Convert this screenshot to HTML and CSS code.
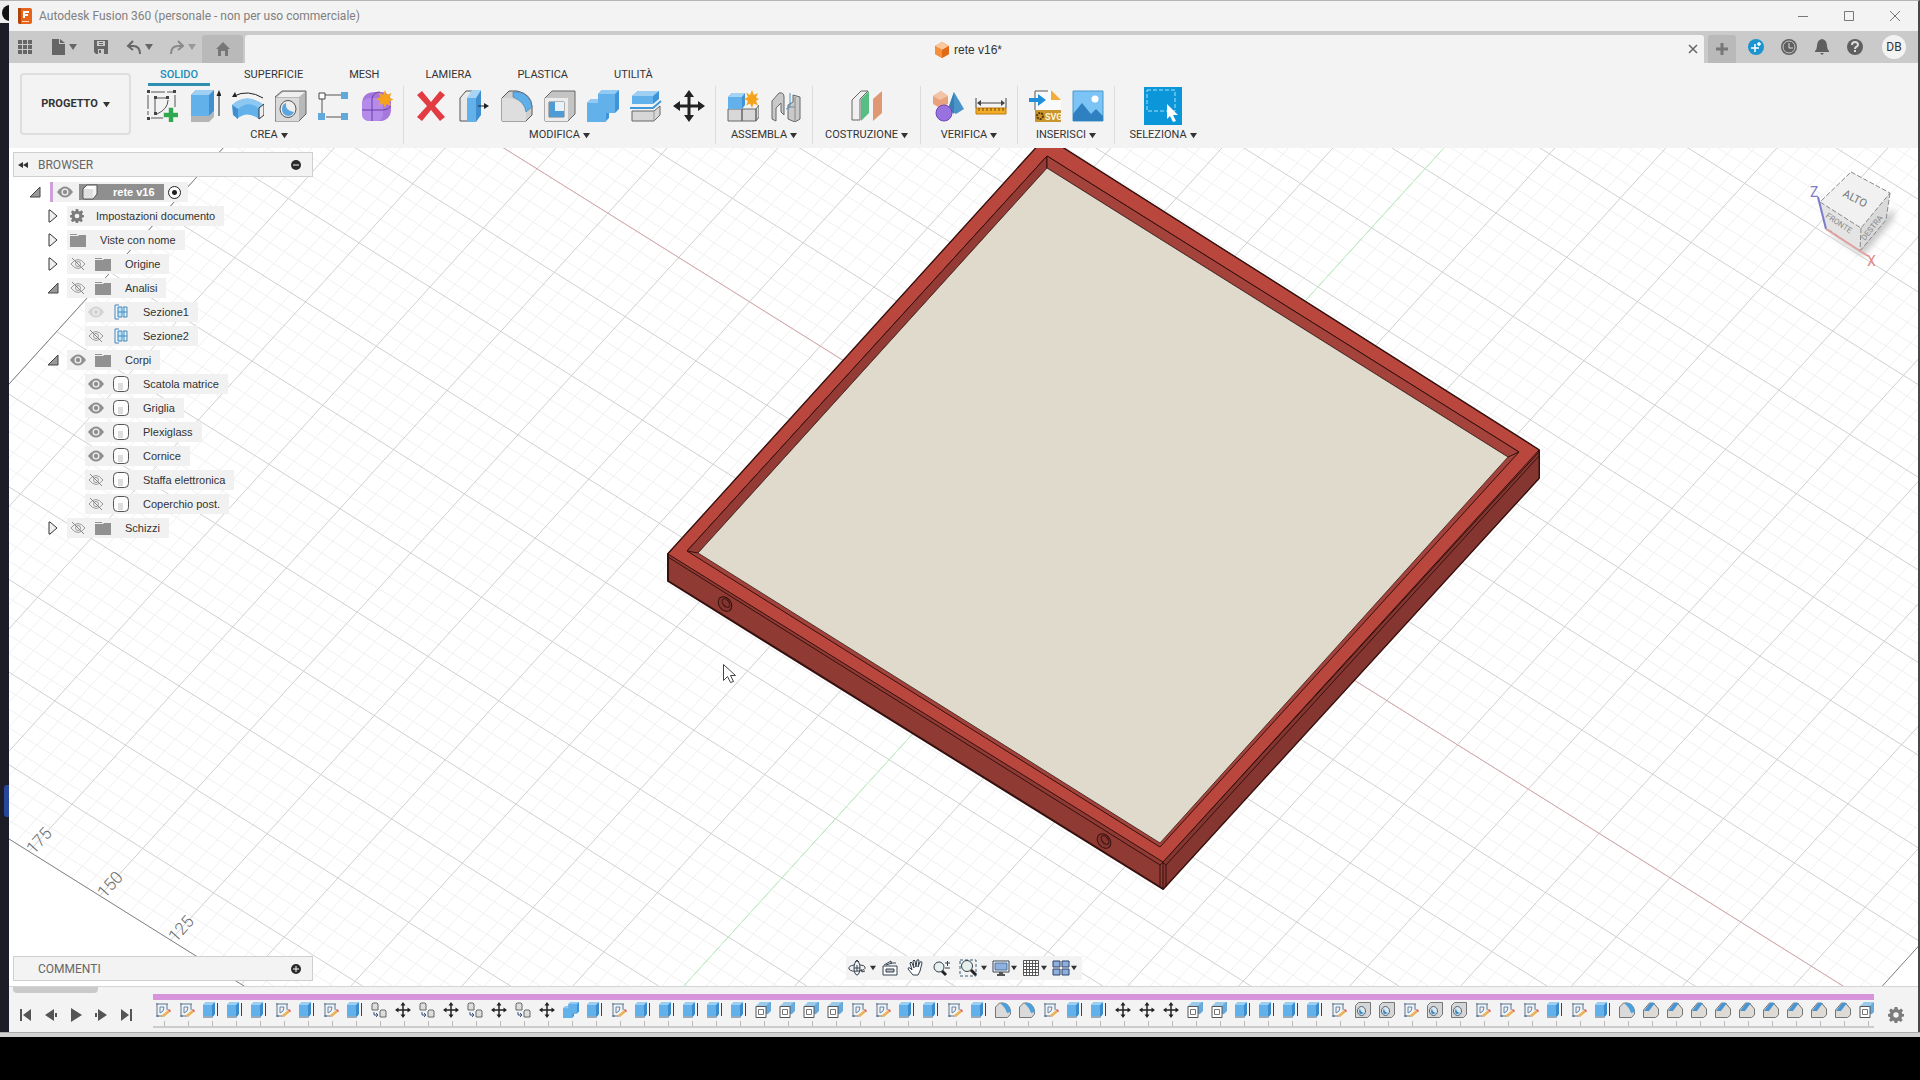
FILE: index.html
```html
<!DOCTYPE html>
<html lang="it">
<head>
<meta charset="utf-8">
<title>Autodesk Fusion 360</title>
<link rel="stylesheet" href="styles.css">
</head>
<body>
<svg class="defs" aria-hidden="true">
  <symbol id="caret" viewBox="0 0 8 8"><path d="M0 1h8L4 7z" fill="currentColor"/></symbol>

  <symbol id="r-sketch" viewBox="0 0 32 32"><path d="M5 2h22M2 5v20M29 5v12M5 28h12" stroke="#555" fill="none" stroke-dasharray="14 2"/><path d="M9 9v14M11 8h9M22 10q0 9-11 14" stroke="#555" fill="none"/><path d="M1 0h3v3H1zM27 0h3v3h-3zM1 27h3v3H1zM8 6h3v3H8zM20 6h3v3h-3zM8 22h3v3H8z" fill="#444"/><path d="M22.500 17.500h5v5h5v5h-5v5h-5v-5h-5v-5h5z" fill="#2fa84f" stroke="#f3f3f3" stroke-width=".6"/></symbol>
  <symbol id="r-extrude" viewBox="0 0 32 32"><path d="M2 26h18l5-5v6l-5 5H2z" fill="#b5b5b5"/><path d="M2 5l5-5h18v21l-5 5H2z" fill="#3f8fd0"/><path d="M2 5h18v21H2z" fill="#62b1ea"/><path d="M2 5l5-5h18l-5 5z" fill="#9fd0f4"/><path d="M30 26V4" stroke="#222"/><path d="M27.500 6L30 0l2.500 6z" fill="#222"/></symbol>
  <symbol id="r-revolve" viewBox="0 0 32 32"><path d="M2 6Q16-1 31 8" stroke="#222" fill="none"/><path d="M0 7l3-5 2 5z" fill="#222"/><path d="M0 15Q14 2 32 15l-5 14Q15 20 5 29z" fill="#62b1ea"/><path d="M0 15Q14 2 32 15l-6 3Q16 10 6 19z" fill="#8cc8f2"/><path d="M0 15l6 4v10l-5-4z" fill="#3f8fd0"/><path d="M32 14v11l-5 4V18z" fill="#eee" stroke="#333"/></symbol>
  <symbol id="r-hole" viewBox="0 0 32 32"><path d="M0 7l7-6h24v23l-7 7H0z" fill="#b8b8b8" stroke="#666"/><path d="M1 8h23v23H1z" fill="#dadada"/><path d="M2 7l6-5h22l-6 5z" fill="#efefef"/><ellipse cx="13" cy="19" rx="8" ry="8.500" fill="#eee" stroke="#555"/><path d="M11 13q-1 8 8 9-2 4-6 4-6-1-6-7 0-5 4-6z" fill="#5ba6de"/></symbol>
  <symbol id="r-pattern" viewBox="0 0 32 32"><path d="M6 5h17M4 8v16M8 27h15" stroke="#555"/><path d="M1 3h6v6H1z" fill="#fff" stroke="#444"/><path d="M23 2h7v7h-7zM0 23h7v7H0zM23 23h7v7h-7z" fill="#5fa9dd"/></symbol>
  <symbol id="r-form" viewBox="0 0 32 32"><path d="M1 13Q2 2 14 2h8q8 2 8 10v9q-1 8-9 10H9q-8 0-8-8z" fill="#a678dd"/><path d="M1 13Q3 8 10 8h8q4 1 4 6v9q0 7-5 8H9q-8 0-8-8z" fill="#b48bea"/><path d="M11 8v23M1 20h21q5 0 8-4M11 8q2-6 8-6" stroke="#6a3da4" fill="none"/><path d="M24 0l1.800 5 4.700-2-2 4.700 4 1.800-4.500 2 2 4.500-4.500-2L24 18l-2-4.500-4.500 2 2-4.500-4.500-2 4.500-2-2-4.500L22 5z" fill="#f5a31c"/></symbol>
  <symbol id="r-delete" viewBox="0 0 32 32"><path d="M2 5l5-4 9 11 9-11 5 4-10 11 10 11-5 4-9-11-9 11-5-4 10-11z" fill="#e23b42"/></symbol>
  <symbol id="r-press" viewBox="0 0 32 32"><path d="M2 8l6-7h7l-5 7v23H2z" fill="#e9e9e9" stroke="#555"/><path d="M9 8h9v24H9z" fill="#62b1ea"/><path d="M9 8l5-8h9l-5 8z" fill="#a5d4f5"/><path d="M18 8l5-8v25l-5 7z" fill="#3f8fd0"/><path d="M20 16h8" stroke="#222"/><path d="M26 13l5 3-5 3z" fill="#222"/></symbol>
  <symbol id="r-fillet" viewBox="0 0 32 32"><path d="M1 31V8l7-7h8q14 3 15 15v9l-6 6z" fill="#cfcfcf" stroke="#555"/><path d="M1 31V8h7q15 2 17 14v9z" fill="#dedede"/><path d="M12 2h7q11 4 12 15l-6 5Q24 12 12 7z" fill="#5fb0ea" stroke="#47789d" stroke-width=".6"/></symbol>
  <symbol id="r-shell" viewBox="0 0 32 32"><path d="M1 8l7-7h23v23l-7 7H1z" fill="#c4c4c4" stroke="#666"/><path d="M1 8h23v23H1z" fill="#ececec"/><path d="M5 12h15v15H5z" fill="#fff" stroke="#777"/><path d="M5 12h6v9h9v6H5z" fill="#4e9bd5"/><path d="M11 12h9v9h-9z" fill="#e7f2fb"/></symbol>
  <symbol id="r-combine" viewBox="0 0 32 32"><path d="M0 13l4-4h7V4l4-4h17v19l-4 4h-6v5l-4 4H0z" fill="#3f94d8"/><path d="M0 13h11V4h17v19h-9v9H0z" fill="#62b1ea"/><path d="M11 4l4-4h17l-4 4zM0 13l4-4h7v4z" fill="#93caf3"/></symbol>
  <symbol id="r-split" viewBox="0 0 32 32"><path d="M2 6l6-5h21v8l-6 5H2z" fill="#3f94d8"/><path d="M2 6h21v8H2z" fill="#62b1ea"/><path d="M2 6l6-5h21l-6 5z" fill="#9fd0f4"/><path d="M0 18h23l8-7" stroke="#3e98da" stroke-width="2" fill="none"/><path d="M2 21h22l6-5v9l-6 6H2z" fill="#d7d7d7" stroke="#666"/><path d="M24 21v10" stroke="#999"/></symbol>
  <symbol id="r-move" viewBox="0 0 32 32"><path d="M16 0l5 7h-3.500v7.500H25V11l7 5-7 5v-3.500h-7.500V25H21l-5 7-5-7h3.500v-7.500H7V21l-7-5 7-5v3.500h7.500V7H11z" fill="#222"/></symbol>
  <symbol id="r-component" viewBox="0 0 32 32"><path d="M1 19h14v12H1zM15 19h14v12H15zM29 19l3-4v12l-3 4z" fill="#d8d8d8" stroke="#666"/><path d="M1 7l4-4h13v12l-3 4H1z" fill="#3f94d8"/><path d="M1 7h14v12H1z" fill="#62b1ea"/><path d="M1 7l4-4h13l-3 4z" fill="#a4d4f5"/><path d="M25 0l1.800 5 4.200-2-2 4.500 3 1.500-3 2 2 4.500-4.500-2L25 18l-2-4.500-4 2 2-4.500-4-2 4-2-2-4.500L23 5z" fill="#f5a31c"/></symbol>
  <symbol id="r-joint" viewBox="0 0 32 32"><path d="M2 11l7-8q5-1 5 4v18l-3-3V13l-5 5v13l-4-2z" fill="#c9c9c9" stroke="#666"/><path d="M30 7v22l-5 3-7-3V15l5-3V5z" fill="#c9c9c9" stroke="#666"/><path d="M25 7v24M18 17h7" stroke="#888"/><path d="M20 3v14l-4 2" stroke="#3e98da" fill="none"/></symbol>
  <symbol id="r-plane" viewBox="0 0 32 32"><path d="M1 10L10 1h7L9 9v21H1z" fill="#f0f0f0" stroke="#666"/><path d="M10 9l8-8v22l-8 8z" fill="#56be82"/><path d="M22 9l9-8v22l-9 8z" fill="#e09872"/></symbol>
  <symbol id="r-measure" viewBox="0 0 32 32"><path d="M1 6l8-5 7 5v8l-8 4-7-4z" fill="#e9a37c"/><path d="M9 1l7 5-8 4-7-4z" fill="#f3c3a5"/><path d="M22 2l10 17-8 5-8-5z" fill="#4b94c9"/><path d="M22 2v22l-6-5z" fill="#3a7fb2"/><circle cx="12" cy="23" r="8" fill="#9a72e0" stroke="#6e48b8"/></symbol>
  <symbol id="r-ruler" viewBox="0 0 32 32"><path d="M1 8v10M31 8v10M3 13h26" stroke="#444"/><path d="M6 10l-4 3 4 3zM26 10l4 3-4 3z" fill="#444"/><path d="M1 18h30v6H1z" fill="#f0ad25" stroke="#c07a12"/><path d="M4 18v3M8 18v3M12 18v3M16 18v3M20 18v3M24 18v3M28 18v3" stroke="#704606"/></symbol>
  <symbol id="r-insert" viewBox="0 0 32 32"><path d="M6 0h18l8 10v22H6z" fill="#fafafa"/><path d="M6 20V1h13" stroke="#555" fill="none"/><path d="M22 0l10 10H22z" fill="#f2ab3c"/><path d="M0 8h9V4l8 6-8 6v-4H0z" fill="#2090dc"/><path d="M6 20h27v12H6z" fill="#c9962e"/><circle cx="11" cy="26" r="3" fill="none" stroke="#5b3805" stroke-width="2" stroke-dasharray="2 1"/><text x="16" y="30" font-size="9" font-weight="700" fill="#fff3d5" font-family="Roboto, sans-serif">SVG</text></symbol>
  <symbol id="r-image" viewBox="0 0 32 32"><path d="M1 1h30v30H1z" fill="#7cc4f5" stroke="#4b98cd"/><path d="M1 24l9-11 9 11 5-5 7 7v5H1z" fill="#2f80c0"/><circle cx="23" cy="9" r="3.500" fill="#fff"/></symbol>
  <symbol id="r-select" viewBox="0 0 38 38"><path d="M0 0h38v38H0z" fill="#0a96d9"/><path d="M3 3h28v21H3z" fill="none" stroke="#a8e0fa" stroke-dasharray="4 2"/><path d="M23 17v15l3-3 3 6 3-1-3-6h5z" fill="#fff"/></symbol>

  <symbol id="t-sk" viewBox="0 0 16 16"><path d="M1 2h12M2 1v14M12 2v6M2 14h6M1 14h3" stroke="#5d7590" fill="none"/><path d="M5 5v6M5 5h4M9 5q0 5-4 6" stroke="#5d86ad" fill="none"/><path d="M6 14l7-6 2 2-6 5z" fill="#e9b45b"/><path d="M13 8l1-1 2 2-1 1z" fill="#d45"/></symbol>
  <symbol id="t-ex" viewBox="0 0 16 16"><path d="M0 3l3-3h9v12l-3 4H0z" fill="#3d8dcd"/><path d="M0 3h9v11H0z" fill="#62b1ea"/><path d="M0 3l3-3h9L9 3z" fill="#9ccff2"/><path d="M0 14h10l-1 2H0z" fill="#9ab"/><path d="M14.500 14V1" stroke="#345"/></symbol>
  <symbol id="t-cp" viewBox="0 0 16 16"><path d="M2 1h4l1 1v6H1V2zM10 8h4l1 1v6H9V9z" fill="#dedede" stroke="#666"/><path d="M3 10v3h4M5 11l2 2-2 2" stroke="#357" fill="none"/></symbol>
  <symbol id="t-mv" viewBox="0 0 32 32"><use href="#r-move"/></symbol>
  <symbol id="t-cb" viewBox="0 0 32 32"><use href="#r-combine"/></symbol>
  <symbol id="t-sh" viewBox="0 0 16 16"><path d="M5 4V1l1-1h10v9l-3 3h-2V4z" fill="#67a9da"/><path d="M1 4.500h10v11H1z" fill="#fff" stroke="#555"/><path d="M3.500 7.500h5v5h-5z" fill="#fff" stroke="#777"/><path d="M1 4l4-4h10l-4 4z" fill="#9ccaea"/></symbol>
  <symbol id="t-fi" viewBox="0 0 16 16"><path d="M.5 15.500V5l4-4h4q6 1 7 8v3l-3 3.500z" fill="#dadada" stroke="#777"/><path d="M6 1h4q5 3 6 9l-4 1Q10 5 6 2z" fill="#4b9fdd"/></symbol>
  <symbol id="t-ho" viewBox="0 0 16 16"><path d="M.5 3.500l3-3h12v12l-3 3H.5z" fill="#d6d6d6" stroke="#777"/><ellipse cx="6.500" cy="9" rx="4" ry="4.500" fill="#dde8ef" stroke="#567"/><path d="M5 6q0 4 4 5-5 3-5-2z" fill="#3f8dc4"/></symbol>
  <symbol id="t-ch" viewBox="0 0 16 16"><path d="M.5 15.500V8l6-7h4l5 6v6l-3 2.500z" fill="#dedad4" stroke="#777"/><path d="M1 9l6-8h5L6 9z" fill="#4b94d2"/></symbol>

  <symbol id="eye" viewBox="0 0 16 12"><path d="M0 6q8-11 16 0-8 11-16 0z" fill="#8f8f8f"/><circle cx="8" cy="6" r="3.500" fill="#f1f1f1"/><circle cx="8" cy="6" r="2.200" fill="#8f8f8f"/></symbol>
  <symbol id="eye-off" viewBox="0 0 16 12"><path d="M1 6q7-9 14 0-7 9-14 0z" fill="none" stroke="#9a9a9a"/><circle cx="8" cy="6" r="2.500" fill="none" stroke="#9a9a9a"/><path d="M2 0l12 12" stroke="#888"/></symbol>
  <symbol id="folder" viewBox="0 0 16 14"><path d="M0 1h7v1H0zM0 3h8l1-1h7v12H0z" fill="#919191"/></symbol>
  <symbol id="gear" viewBox="0 0 16 16"><path d="M6.600 0h2.800l.4 2.300 1.400.6L13.100 1.500l2 2-1.500 1.900.5 1.300 1.900.3v2.500l-2 .3-.6 1.400 1.300 1.900-1.900 2-1.900-1.400-1.300.6-.3 1.700H6.600l-.4-1.800-1.400-.6-1.800 1.400-2-1.900 1.300-1.900L1.800 10 0 9.500V7l1.900-.4.5-1.400L1 3.400l2-1.900 1.900 1.300 1.300-.6zM8 5.300A2.700 2.700 0 108 10.700 2.700 2.700 0 008 5.300z" fill="#7c7c7c"/></symbol>
  <symbol id="section" viewBox="0 0 14 16"><path d="M5 1H1v14h4M9 3h4v10H9" fill="none" stroke="#4889b8"/><path d="M4 3h4v10H4z" fill="#bfe3fa" stroke="#3b8cc4"/><path d="M4 8h9M10 3v10" stroke="#3b8cc4"/></symbol>
  <symbol id="body" viewBox="1 1 16 16"><rect x="1.500" y="1.500" width="15" height="15" rx="4" fill="#fdfdfd" stroke="#555"/><path d="M6 8h5v7H6z" fill="#ddd"/></symbol>
  <symbol id="cube" viewBox="1 1 16 16"><path d="M2 6l4-4h10v9l-4 5H3l-1-1z" fill="#f4f4f4" stroke="#555"/><path d="M3 6h9v9H3z" fill="#e0e0e0"/><path d="M3 6l3-3h9l-3 3z" fill="#fff"/></symbol>
  <symbol id="closed" viewBox="0 0 10 14"><path d="M1 1v12h1l7-6-7-6z" fill="#efefef" stroke="#333"/></symbol>
  <symbol id="open" viewBox="0 0 12 12"><path d="M11 1v10H1z" fill="#999" stroke="#444"/></symbol>

  <symbol id="n-orbit" viewBox="0 0 18 18"><ellipse cx="9" cy="9" rx="3" ry="7" fill="none" stroke="#34404e"/><path d="M6 6q-6 1-5 4 2 3 10 2 7-1 6-4-1-2-5-2" fill="none" stroke="#34404e"/><path d="M9 6v6M6 9h6M7 3l2-2 2 2M13 10l1 3 3-1" stroke="#34404e" fill="none"/></symbol>
  <symbol id="n-look" viewBox="0 0 18 18"><path d="M2 7h14v9H2z" fill="#fff" stroke="#34404e"/><path d="M5 10h8v3H5z" fill="#bbb" stroke="#34404e"/><path d="M3 6l7-4v2h5M5 6l6-2" stroke="#34404e" fill="none"/></symbol>
  <symbol id="n-hand" viewBox="0 0 18 18"><path d="M6 16l-5-6q0-2 2-1l2 2-2-7q1-2 2 0l2 5-1-7q1-2 2 0l1 6 1-7q2-1 2 1l-1 6 2-5q2-1 2 1l-2 8-2 4z" fill="#fff" stroke="#34404e"/></symbol>
  <symbol id="n-zoom" viewBox="0 0 18 18"><circle cx="6" cy="8" r="5" fill="#e6f0f0" stroke="#34404e"/><path d="M9 12l4 4" stroke="#222" stroke-width="3"/><path d="M12 4h5M14.500 2v5M12 9h5" stroke="#34404e"/></symbol>
  <symbol id="n-fit" viewBox="0 0 18 18"><path d="M1 1h16v16H1z" fill="none" stroke="#35607a" stroke-dasharray="3 2"/><circle cx="8" cy="7" r="5.500" fill="#e6f0ea" stroke="#34404e"/><path d="M12 11l5 5" stroke="#222" stroke-width="3"/></symbol>
  <symbol id="n-screen" viewBox="0 0 18 18"><path d="M1 2h16v11H1z" fill="#fff" stroke="#34404e"/><path d="M3 4h12v7H3z" fill="#8eb2e0" stroke="#4f6d95"/><path d="M7 13h4v2h2v2H5v-2h2z" fill="#555"/></symbol>
  <symbol id="n-grid" viewBox="0 0 18 18"><path d="M1.500 1.500h15v15h-15zM4.500 1v16M7.500 1v16M10.500 1v16M13.500 1v16M1 4.500h16M1 7.500h16M1 10.500h16M1 13.500h16" fill="#fff" stroke="#555"/></symbol>
  <symbol id="n-views" viewBox="0 0 18 18"><path d="M1 2h7v6H1zM10 2h7v6h-7zM1 10h7v6H1zM10 10h7v6h-7z" fill="#8fb0df" stroke="#2d4468"/></symbol>
</svg>

<div class="desktop">
  <aside class="behind"><span class="behind-tab"></span><span class="behind-logo"></span><span class="behind-accent"></span></aside>
  <div class="window">
    <header class="titlebar">
      <svg class="logo" viewBox="0 0 14 16"><rect width="14" height="16" rx="2" fill="#e8641b"/><path d="M0 0h3v16H2a2 2 0 01-2-2z" fill="#b34408"/><path d="M5 3h6v2H7v1h3v2H7v2H5z" fill="#fff"/><path d="M4 13h7v1H4z" fill="#ffd2b5"/></svg>
      <h1>Autodesk Fusion 360 (personale - non per uso commerciale)</h1>
      <button aria-label="Riduci"><svg viewBox="0 0 12 12"><path d="M1 6.500h10" stroke="#777"/></svg></button>
      <button aria-label="Ingrandisci"><svg viewBox="0 0 12 12"><path d="M1.500 1.500h9v9h-9z" fill="none" stroke="#777"/></svg></button>
      <button aria-label="Chiudi"><svg viewBox="0 0 12 12"><path d="M1 1l10 10M11 1L1 11" stroke="#777"/></svg></button>
    </header>

    <div class="docbar">
      <div class="quick">
        <button aria-label="Pannello dati"><svg viewBox="0 0 16 16"><path d="M1 1h4v4H1zM6 1h4v4H6zM11 1h4v4h-4zM1 6h4v4H1zM6 6h4v4H6zM11 6h4v4h-4zM1 11h4v4H1zM6 11h4v4H6zM11 11h4v4h-4z" fill="#666"/></svg></button>
        <button class="menu" aria-label="File"><svg viewBox="0 0 16 16"><path d="M2 0h7v5h6v11H2z" fill="#666"/><path d="M10 0l5 4h-5z" fill="#666"/></svg><svg class="caret"><use href="#caret"/></svg></button>
        <button aria-label="Salva"><svg viewBox="0 0 16 16"><path d="M1 1h14v14H3l-2-2z" fill="#666"/><path d="M4 2h8v5H4zM5 10h6v5H5z" fill="#cacaca"/><path d="M6 3h4v1H6zM6 5h4v1H6zM6 11h2v3H6z" fill="#666"/></svg></button>
        <button class="menu" aria-label="Annulla"><svg viewBox="0 0 16 16"><path d="M7 2L2 7l5 4M2 7h5q7 0 7 8" fill="none" stroke="#666" stroke-width="2"/></svg><svg class="caret"><use href="#caret"/></svg></button>
        <button class="menu dim" aria-label="Ripeti"><svg viewBox="0 0 16 16"><path d="M9 2l5 5-5 4M14 7H9q-7 0-7 8" fill="none" stroke="#8a8a8a" stroke-width="2"/></svg><svg class="caret"><use href="#caret"/></svg></button>
      </div>
      <button class="home" aria-label="Home"><svg viewBox="0 0 16 16"><path d="M8 1l7 7h-2v7h-3v-5H6v5H3V8H1z" fill="#777"/></svg></button>
      <div class="doctab">
        <span class="docname"><svg viewBox="0 0 14 16"><path d="M7 0l7 4v8l-7 4-7-4V4z" fill="#f0791e"/><path d="M7 0l7 4-7 4-7-4z" fill="#fbc79c"/><path d="M7 8l7-4v8l-7 4z" fill="#e06a15"/><path d="M0 4l7 4v8l-7-4z" fill="#f58f3c"/></svg>rete v16*</span>
        <button aria-label="Chiudi documento"><svg viewBox="0 0 10 10"><path d="M1 1l8 8M9 1L1 9" stroke="#666" stroke-width="1.500"/></svg></button>
      </div>
      <button class="newtab" aria-label="Nuovo"><svg viewBox="0 0 14 14"><path d="M7 1v12M1 7h12" stroke="#777" stroke-width="3"/></svg></button>
      <div class="account">
        <button aria-label="Estensioni"><svg viewBox="0 0 16 16"><circle cx="8" cy="8" r="8" fill="#1c94d0"/><path d="M7 5v8M3 9h8M11 3v4M9 5h4" stroke="#fff" stroke-width="1.500"/></svg></button>
        <button aria-label="Stato processi"><svg viewBox="0 0 16 16"><circle cx="8" cy="8" r="8" fill="#5f5f5f"/><circle cx="8" cy="8" r="6" fill="none" stroke="#cacaca"/><path d="M8 4v5h4" stroke="#ddd" fill="none"/></svg></button>
        <button aria-label="Notifiche"><svg viewBox="0 0 16 16"><path d="M8 0q5 1 5 7 0 3 2 5v1H1v-1q2-2 2-5 0-6 5-7zM6 14h4l-2 2z" fill="#5f5f5f"/></svg></button>
        <button aria-label="Guida"><svg viewBox="0 0 16 16"><circle cx="8" cy="8" r="8" fill="#5f5f5f"/><path d="M5 6q0-3 3-3t3 3q0 1-2 2-1 1-1 2M8 11v2" stroke="#ddd" stroke-width="2" fill="none"/></svg></button>
        <button class="avatar">DB</button>
      </div>
    </div>

    <div class="ribbon">
      <button class="workspace">PROGETTO <svg class="caret"><use href="#caret"/></svg></button>
      <div class="ribbon-main">
        <nav class="tabs">
          <button class="active">SOLIDO</button><button>SUPERFICIE</button><button>MESH</button><button>LAMIERA</button><button>PLASTICA</button><button>UTILITÀ</button>
        </nav>
        <div class="groups">
          <section><div class="tools"><button aria-label="Crea schizzo"><svg><use href="#r-sketch"/></svg></button><button aria-label="Estrusione"><svg><use href="#r-extrude"/></svg></button><button aria-label="Rivoluzione"><svg><use href="#r-revolve"/></svg></button><button aria-label="Foro"><svg><use href="#r-hole"/></svg></button><button aria-label="Serie"><svg><use href="#r-pattern"/></svg></button><button aria-label="Crea forma"><svg><use href="#r-form"/></svg></button></div><button class="label">CREA <svg class="caret"><use href="#caret"/></svg></button></section>
          <section><div class="tools"><button aria-label="Elimina"><svg><use href="#r-delete"/></svg></button><button aria-label="Premi/Tira"><svg><use href="#r-press"/></svg></button><button aria-label="Raccordo"><svg><use href="#r-fillet"/></svg></button><button aria-label="Svuota"><svg><use href="#r-shell"/></svg></button><button aria-label="Combina"><svg><use href="#r-combine"/></svg></button><button aria-label="Dividi"><svg><use href="#r-split"/></svg></button><button aria-label="Sposta"><svg><use href="#r-move"/></svg></button></div><button class="label">MODIFICA <svg class="caret"><use href="#caret"/></svg></button></section>
          <section><div class="tools"><button aria-label="Nuovo componente"><svg><use href="#r-component"/></svg></button><button aria-label="Giunto"><svg><use href="#r-joint"/></svg></button></div><button class="label">ASSEMBLA <svg class="caret"><use href="#caret"/></svg></button></section>
          <section class="single"><div class="tools"><button aria-label="Piano di offset"><svg><use href="#r-plane"/></svg></button></div><button class="label">COSTRUZIONE <svg class="caret"><use href="#caret"/></svg></button></section>
          <section><div class="tools"><button aria-label="Interferenza"><svg><use href="#r-measure"/></svg></button><button aria-label="Misura"><svg><use href="#r-ruler"/></svg></button></div><button class="label">VERIFICA <svg class="caret"><use href="#caret"/></svg></button></section>
          <section><div class="tools"><button aria-label="Inserisci SVG"><svg><use href="#r-insert"/></svg></button><button aria-label="Inserisci immagine"><svg><use href="#r-image"/></svg></button></div><button class="label">INSERISCI <svg class="caret"><use href="#caret"/></svg></button></section>
          <section><div class="tools"><button class="big" aria-label="Seleziona"><svg><use href="#r-select"/></svg></button></div><button class="label">SELEZIONA <svg class="caret"><use href="#caret"/></svg></button></section>
        </div>
      </div>
    </div>

    <main class="viewport">
      <svg class="scene" viewBox="9 148 1909 838" preserveAspectRatio="xMidYMid slice">
        <path id="minor" fill="none" stroke="#f0f0f0"/>
        <path id="major" fill="none" stroke="#d0d0d0"/>
        <path id="edge" fill="none" stroke="#808080"/>
        <path id="axis-x" stroke="#d8a9ab"/>
        <path id="axis-y" stroke="#b9f3bd"/>
        <g font-family="Roboto, sans-serif" font-size="17" font-weight="300" fill="#6b6b6b">
          <text transform="translate(34 855) rotate(-48)">175</text>
          <text transform="translate(105 899) rotate(-48)">150</text>
          <text transform="translate(176 943) rotate(-48)">125</text>
        </g>
        <g stroke="#35100e" stroke-linejoin="round">
          <path d="M668 554L1046 137 1539 450V478L1163 889 668 581z" fill="#903a34" stroke-width="2"/>
          <path d="M1163 862L1539 452V478L1163 889z" fill="#853631"/>
          <path d="M668 554L1046 137 1539 450 1163 862z" fill="#b9473e"/>
          <path d="M668 557L1160 865V887M1166 887V865L1539 456M1160 865q3-4 6 0" fill="none"/>
          <path d="M687 551L1047 156 1519 452 1160 847z" fill="#a4433c"/>
          <path d="M687 551L1047 156V168L698 553z" fill="#953b35"/>
          <path d="M1047 156L1519 452 1508 457 1047 168z" fill="#a4433c"/>
          <path d="M698 553L1047 168 1508 457 1160 843z" fill="#e0dacd" stroke="#54302b"/>
          <g fill="#843530"><ellipse cx="725" cy="604" rx="6" ry="8" transform="rotate(-38 725 604)"/><ellipse cx="726" cy="603" rx="3" ry="5" transform="rotate(-38 726 603)"/><ellipse cx="1104" cy="841" rx="6" ry="8" transform="rotate(-38 1104 841)"/><ellipse cx="1105" cy="840" rx="3" ry="5" transform="rotate(-38 1105 840)"/></g>
        </g>
        <path d="M723.500 664.500v16l4-4 3 6 3-1-3-6h5z" fill="#fff" stroke="#444"/>
      </svg>

      <div class="overlay top">
        <section class="browser">
          <header class="panel"><svg class="collapse" viewBox="0 0 10 6"><path d="M5 0v6L0 3zM10 0v6L5 3z" fill="#333"/></svg><h2>BROWSER</h2><button aria-label="Comprimi"><svg viewBox="0 0 10 10"><circle cx="5" cy="5" r="5" fill="#2b2b2b"/><path d="M2 5h6" stroke="#fff"/></svg></button></header>
          <ul class="tree">
            <li class="root"><svg class="arrow"><use href="#open"/></svg><span class="row"><svg class="eye"><use href="#eye"/></svg><b><svg class="ico"><use href="#cube"/></svg>rete v16</b><input type="radio" checked aria-label="Attiva componente"></span></li>
            <li class="l1"><svg class="arrow"><use href="#closed"/></svg><span class="row doc"><svg class="gear"><use href="#gear"/></svg>Impostazioni documento</span></li>
            <li class="l1"><svg class="arrow"><use href="#closed"/></svg><span class="row views"><svg class="ico"><use href="#folder"/></svg>Viste con nome</span></li>
            <li class="l1"><svg class="arrow"><use href="#closed"/></svg><span class="row"><svg class="eye"><use href="#eye-off"/></svg><svg class="ico"><use href="#folder"/></svg>Origine</span></li>
            <li class="l1"><svg class="arrow"><use href="#open"/></svg><span class="row"><svg class="eye"><use href="#eye-off"/></svg><svg class="ico"><use href="#folder"/></svg>Analisi</span></li>
            <li class="l2"><span class="row"><svg class="eye faint"><use href="#eye"/></svg><svg class="ico"><use href="#section"/></svg>Sezione1</span></li>
            <li class="l2"><span class="row"><svg class="eye"><use href="#eye-off"/></svg><svg class="ico"><use href="#section"/></svg>Sezione2</span></li>
            <li class="l1"><svg class="arrow"><use href="#open"/></svg><span class="row"><svg class="eye"><use href="#eye"/></svg><svg class="ico"><use href="#folder"/></svg>Corpi</span></li>
            <li class="l2"><span class="row"><svg class="eye"><use href="#eye"/></svg><svg class="ico"><use href="#body"/></svg>Scatola matrice</span></li>
            <li class="l2"><span class="row"><svg class="eye"><use href="#eye"/></svg><svg class="ico"><use href="#body"/></svg>Griglia</span></li>
            <li class="l2"><span class="row"><svg class="eye"><use href="#eye"/></svg><svg class="ico"><use href="#body"/></svg>Plexiglass</span></li>
            <li class="l2"><span class="row"><svg class="eye"><use href="#eye"/></svg><svg class="ico"><use href="#body"/></svg>Cornice</span></li>
            <li class="l2"><span class="row"><svg class="eye"><use href="#eye-off"/></svg><svg class="ico"><use href="#body"/></svg>Staffa elettronica</span></li>
            <li class="l2"><span class="row"><svg class="eye"><use href="#eye-off"/></svg><svg class="ico"><use href="#body"/></svg>Coperchio post.</span></li>
            <li class="l1"><svg class="arrow"><use href="#closed"/></svg><span class="row"><svg class="eye"><use href="#eye-off"/></svg><svg class="ico"><use href="#folder"/></svg>Schizzi</span></li>
          </ul>
        </section>
        <svg class="viewcube" viewBox="1805 162 100 110" font-family="Roboto, sans-serif">
          <defs><filter id="soft" x="-20%" y="-20%" width="140%" height="140%"><feGaussianBlur stdDeviation="3"/></filter></defs>
          <path d="M1829 232l34 24 30-36 2-12-34 26z" fill="#c8c8c8" filter="url(#soft)"/>
          <path d="M1851 172l39 21-29 35-41-26z" fill="#f1f1f1"/>
          <path d="M1820 202l41 26-1 23-34-23z" fill="#e4e4e4"/>
          <path d="M1890 193l-29 35-1 23 26-31z" fill="#dadada"/>
          <path d="M1851 172l39 21-29 35-41-26zM1861 228l-1 23-34-23M1890 193l-4 27-26 31" fill="none" stroke="#888" stroke-dasharray="5 2"/>
          <path d="M1818 197l8 32" stroke="#7c7cc8" stroke-width="2"/><path d="M1826 229l42 27" stroke="#e3a0a0" stroke-width="2"/>
          <text transform="translate(1842 196) rotate(27)" font-size="11" fill="#777">ALTO</text>
          <text transform="translate(1825 217) rotate(34)" font-size="8" fill="#888">FRONTE</text>
          <text transform="translate(1865 241) rotate(-52)" font-size="8" fill="#888">DESTRA</text>
          <text x="1810" y="197" font-size="14" fill="#7c7cc8">Z</text>
          <text x="1867" y="266" font-size="14" fill="#e08484">X</text>
        </svg>
      </div>
      <div class="overlay bottom">
        <section class="panel comments"><h2>COMMENTI</h2><button aria-label="Espandi"><svg viewBox="0 0 10 10"><circle cx="5" cy="5" r="5" fill="#2b2b2b"/><path d="M2 5h6M5 2v6" stroke="#fff"/></svg></button></section>
        <nav class="navbar">
          <button class="menu" aria-label="Orbita"><svg><use href="#n-orbit"/></svg><svg class="caret"><use href="#caret"/></svg></button>
          <button aria-label="Guarda"><svg><use href="#n-look"/></svg></button>
          <button aria-label="Panoramica"><svg><use href="#n-hand"/></svg></button>
          <button aria-label="Zoom"><svg><use href="#n-zoom"/></svg></button>
          <button class="menu" aria-label="Adatta"><svg><use href="#n-fit"/></svg><svg class="caret"><use href="#caret"/></svg></button>
          <button class="menu tight" aria-label="Visualizzazione"><svg><use href="#n-screen"/></svg><svg class="caret"><use href="#caret"/></svg></button>
          <button class="menu tight" aria-label="Griglia"><svg><use href="#n-grid"/></svg><svg class="caret"><use href="#caret"/></svg></button>
          <button class="menu tight" aria-label="Viste"><svg><use href="#n-views"/></svg><svg class="caret"><use href="#caret"/></svg></button>
        </nav>
      </div>
    </main>

    <footer class="timeline">
      <div class="playback">
        <span class="thumb"></span>
        <div class="transport">
          <button aria-label="Inizio"><svg viewBox="0 0 14 14"><path d="M1 1h2v12H1zM12 1v12L4 7z" fill="#555"/></svg></button>
          <button aria-label="Indietro"><svg viewBox="0 0 14 14"><path d="M10 1v12L1 7zM11 5h2v4h-2z" fill="#555"/></svg></button>
          <button aria-label="Riproduci"><svg viewBox="0 0 14 14"><path d="M2 0v14l11-7z" fill="#555"/></svg></button>
          <button aria-label="Avanti"><svg viewBox="0 0 14 14"><path d="M4 1v12l9-6zM1 5h2v4H1z" fill="#555"/></svg></button>
          <button aria-label="Fine"><svg viewBox="0 0 14 14"><path d="M11 1h2v12h-2zM2 1v12l8-6z" fill="#555"/></svg></button>
        </div>
      </div>
      <div class="history"><div class="group-bar"></div><ol id="features"></ol></div>
      <button class="settings" aria-label="Impostazioni"><svg><use href="#gear"/></svg></button>
    </footer>
  </div>
</div>
<div class="taskbar-edge"></div>
<script src="app.js"></script>
</body>
</html>
```
FILE: styles.css
```css
* { box-sizing: border-box; }
body { margin: 0; height: 100vh; overflow: hidden; display: flex; flex-direction: column; background: #000; color: #333; font: 11px/16px Roboto, "Liberation Sans", sans-serif; padding-bottom: 43px; }
.defs { position: absolute; width: 0; height: 0; }
button { border: 0; padding: 0; margin: 0; background: none; color: inherit; font: inherit; display: flex; align-items: center; justify-content: center; }
h1, h2 { margin: 0; font-weight: 400; }
svg { flex: none; }
.caret { width: 8px; height: 8px; color: #333; }

.desktop { flex: 1; min-height: 0; display: flex; background: #f3f3f3; border-top: 1px solid #b4b4b4; border-right: 2px solid #484848; }
.behind { flex: none; width: 9px; position: relative; background: #1d1d27; overflow: hidden; }
.behind-tab { position: absolute; inset: 0 0 auto; height: 22px; background: #eee; }
.behind-logo { position: absolute; top: 4px; left: 2px; width: 16px; height: 16px; border-radius: 8px; background: #111; }
.behind-accent { position: absolute; left: 4px; top: 784px; width: 8px; height: 32px; border-radius: 3px; background: #27479c; }
.window { flex: 1; min-width: 0; display: flex; flex-direction: column; background: #f3f3f3; }
.taskbar-edge { flex: none; height: 5px; background: #d2d2d2; border-top: 1px solid #aaa; }

.titlebar { flex: none; height: 30px; display: flex; align-items: center; padding-left: 9px; }
.titlebar .logo { width: 14px; height: 16px; }
.titlebar h1 { flex: 1; padding-left: 7px; font-size: 12px; color: #808080; }
.titlebar button { width: 46px; height: 30px; }
.titlebar button svg { width: 12px; height: 12px; }

.docbar { flex: none; height: 32px; padding-top: 4px; display: flex; align-items: stretch; background: #cacaca; }
.quick { width: 193px; padding: 0 6px 4px 8px; display: flex; align-items: center; justify-content: space-between; }
.quick button { gap: 3px; }
.quick svg { width: 16px; height: 16px; }
.quick .caret { width: 8px; height: 8px; color: #666; }
.quick .dim .caret { color: #999; }
.home { width: 41px; background: #b9b9b9; border-radius: 3px 3px 0 0; }
.home svg { width: 16px; height: 16px; }
.doctab { flex: 1; margin-left: 2px; display: flex; align-items: center; background: #f3f3f3; border-radius: 3px 3px 0 0; padding-right: 6px; }
.docname { flex: 1; display: flex; align-items: center; justify-content: center; gap: 5px; padding: 2px 0 0 4px; font: 12px/16px "Liberation Sans", sans-serif; }
.docname svg { width: 14px; height: 16px; }
.doctab button svg { width: 10px; height: 10px; }
.newtab { width: 28px; margin-left: 4px; background: #b9b9b9; border-radius: 3px 3px 0 0; }
.newtab svg { width: 14px; height: 14px; }
.account { display: flex; align-items: center; gap: 17px; padding: 0 12px 4px; }
.account svg { width: 16px; height: 16px; }
.account .avatar { width: 24px; height: 24px; margin-left: 2px; border-radius: 12px; background: #f3f3f3; font-size: 12px; }

.ribbon { flex: none; height: 85px; display: flex; padding-left: 11px; }
.workspace { width: 111px; height: 62px; margin: 10px 4px 0 0; border: 2px solid #dedede; border-radius: 4px; gap: 5px; font-weight: 700; }
.workspace .caret { width: 7px; height: 7px; }
.ribbon-main { display: flex; flex-direction: column; }
.tabs { display: flex; gap: 22px; padding: 3px 0 0 13px; }
.tabs button { height: 20px; padding: 0 12px; border-bottom: 3px solid transparent; }
.tabs .active { color: #1b8cb8; font-weight: 500; border-color: #2f8fb0; }
.groups { display: flex; }
.groups section { display: flex; flex-direction: column; align-items: center; height: 58px; padding: 0 5px; border-right: 1px solid #dcdcdc; }
.groups .single { width: 108px; }
.groups section:last-child { border: 0; }
.tools { display: flex; height: 40px; align-items: center; }
.tools button { width: 43px; }
.tools svg { width: 32px; height: 32px; overflow: visible; }
.tools .big svg { width: 38px; height: 38px; }
.label { gap: 3px; height: 18px; min-width: 86px; }
.label .caret { width: 7px; height: 7px; }

.viewport { flex: 1; min-height: 0; position: relative; display: flex; flex-direction: column; justify-content: space-between; background: #fff; overflow: hidden; }
.scene { position: absolute; inset: 0; width: 100%; height: 100%; }
.overlay { position: relative; display: flex; justify-content: space-between; padding: 4px; }
.viewcube { width: 100px; height: 110px; margin: 10px 9px 0 0; }
.panel { width: 300px; height: 25px; display: flex; align-items: center; background: #f3f3f3; border: 1px solid #cfcfcf; padding: 0 11px 0 4px; }
.panel h2 { flex: 1; padding-left: 10px; font-size: 12px; color: #666; }
.panel svg { width: 10px; height: 10px; }
.comments h2 { padding-left: 20px; }
.tree { list-style: none; margin: 3px 0 0; padding: 0; font: 11px/16px "Liberation Sans", sans-serif; }
.tree li { display: flex; align-items: center; height: 24px; }
.row { display: flex; align-items: center; height: 20px; padding-right: 9px; background: #f1f1f1; }
.arrow { width: 12px; height: 14px; }
.eye { width: 16px; height: 12px; }
.ico { width: 16px; height: 16px; }
.gear { width: 14px; height: 14px; }
.faint { opacity: .3; }
.root { padding-left: 16px; }
.root .row { margin-left: 9px; padding: 0 7px 0 4px; border-left: 3px solid #cf9fd8; }
.root b { display: flex; align-items: center; gap: 15px; height: 16px; margin-left: 6px; padding: 0 9px 0 3px; background: #8f8f8f; color: #fff; }
.root input { appearance: none; width: 13px; height: 13px; margin: 0 0 0 4px; border: 1px solid #222; border-radius: 7px; background: radial-gradient(circle, #222 2px, #fff 3px); }
.l1 { padding-left: 34px; }
.l1 .row { margin-left: 8px; padding-left: 3px; }
.l1 .eye, .l2 .eye { margin-right: 9px; }
.l1 .ico, .l2 .ico { margin-right: 14px; }
.l1 .gear { margin-right: 12px; }
.l2 { padding-left: 72px; }
.l2 .row { padding-left: 3px; }

.overlay.bottom { display: grid; grid-template-columns: 1fr auto 1fr; align-items: start; padding-bottom: 5px; }
.navbar { height: 24px; display: flex; align-items: center; gap: 8px; padding: 0 8px 0 2px; background: #f3f3f3; }
.navbar svg { width: 18px; height: 18px; }
.navbar .caret { width: 6px; height: 6px; }
.navbar .menu { gap: 4px; margin-right: -3px; }
.navbar .tight { gap: 1px; }

.timeline { flex: none; height: 46px; display: flex; border-top: 1px solid #d4d4d4; background: #f3f3f3; }
.playback { width: 144px; padding-left: 4px; }
.thumb { display: block; width: 85px; height: 6px; border-radius: 0 0 4px 4px; background: #cacaca; }
.transport { display: flex; gap: 11px; padding: 15px 0 0 6px; }
.transport svg { width: 14px; height: 14px; }
.history { flex: 1; min-width: 0; padding-top: 7px; overflow: hidden; }
.group-bar { height: 6px; background: #d794db; }
#features { list-style: none; margin: 0; padding: 2px 0 0; display: flex; overflow: hidden; }
#features li { flex: none; width: 24px; height: 26px; padding-left: 2px; border-bottom: 2px solid #ccc; background: linear-gradient(#bbb, #bbb) 11px 19px / 1px 5px no-repeat; }
#features svg { display: block; width: 16px; height: 16px; }
.settings { width: 44px; padding-top: 10px; }
.settings svg { width: 16px; height: 16px; }
```
FILE: app.js
```js
// Ground grid: one lattice step is 25 mm, split into five minor divisions.
const origin = [1103.5, 523.3];
const u = [70.8, 44.3];
const v = [53.6, -59.1];
const at = (a, b) => (origin[0] + a * u[0] + b * v[0]).toFixed(1) + ' ' + (origin[1] + a * u[1] + b * v[1]).toFixed(1);
const line = (a1, b1, a2, b2) => 'M' + at(a1, b1) + 'L' + at(a2, b2);
const left = -11, right = 10.8, near = -10.8, far = 13;
let minor = '', major = '';
for (let i = -55; i <= 65; i++) {
  const k = i / 5;
  const whole = i % 5 === 0;
  if (k <= right) { const s = line(k, near, k, far); if (whole) major += s; else minor += s; }
  if (k >= near) { const s = line(left, k, right, k); if (whole) major += s; else minor += s; }
}
const set = (id, d) => document.getElementById(id).setAttribute('d', d);
set('minor', minor);
set('major', major);
set('edge', line(left, near, left, far) + line(left, near, right, near) + line(right, near, right, far));
set('axis-x', line(left, 0, right, 0));
set('axis-y', line(0, near, 0, far));

// Design history, oldest feature first.
const features = 'sk sk ex ex ex sk ex sk ex cp mv cp mv cp mv cp mv cb ex sk ex ex ex ex ex sh sh sh sh sk sk ex ex sk ex fi fi sk ex ex mv mv mv sh sh ex ex ex ex sk ho ho sk ho ho sk sk sk ex sk ex fi ch ch ch ch ch ch ch ch ch sh';
document.getElementById('features').innerHTML = features.split(' ')
  .map(f => '<li><svg><use href="#t-' + f + '"/></svg></li>').join('');
```
